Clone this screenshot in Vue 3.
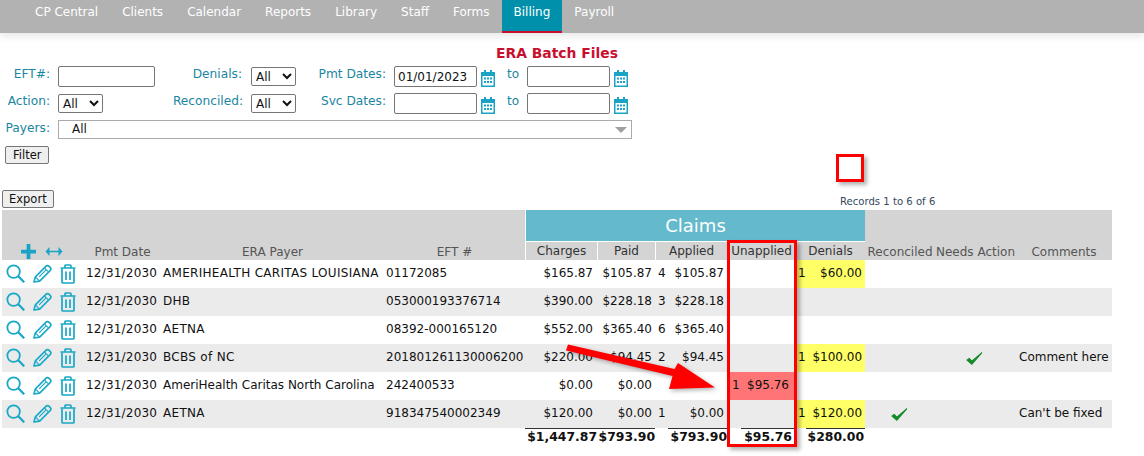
<script setup>
const nav = ['CP Central', 'Clients', 'Calendar', 'Reports', 'Library', 'Staff', 'Forms', 'Billing', 'Payroll']
const rows = [
  { date: '12/31/2030', payer: 'AMERIHEALTH CARITAS LOUISIANA', caps: true, eft: '01172085', charges: '$165.87', paid: '$105.87', ac: '4', applied: '$105.87', dc: '1', denials: '$60.00' },
  { date: '12/31/2030', payer: 'DHB', caps: true, eft: '053000193376714', charges: '$390.00', paid: '$228.18', ac: '3', applied: '$228.18' },
  { date: '12/31/2030', payer: 'AETNA', caps: true, eft: '08392-000165120', charges: '$552.00', paid: '$365.40', ac: '6', applied: '$365.40' },
  { date: '12/31/2030', payer: 'BCBS of NC', caps: true, eft: '201801261130006200', charges: '$220.00', paid: '$94.45', ac: '2', applied: '$94.45', dc: '1', denials: '$100.00', action: true, comment: 'Comment here' },
  { date: '12/31/2030', payer: 'AmeriHealth Caritas North Carolina', eft: '242400533', charges: '$0.00', paid: '$0.00', uc: '1', unapplied: '$95.76' },
  { date: '12/31/2030', payer: 'AETNA', caps: true, eft: '918347540002349', charges: '$120.00', paid: '$0.00', ac: '1', applied: '$0.00', dc: '1', denials: '$120.00', reconciled: true, comment: "Can't be fixed" }
]
const cols = [82, 77, 223, 141, 72, 58, 13, 59, 14, 54, 11, 59, 70, 81, 96]
</script>

<template>
  <div class="page">
    <nav class="nav">
      <a v-for="n in nav" :key="n" class="tab" :class="{ active: n === 'Billing' }">{{ n }}</a>
    </nav>
    <h1 class="title">ERA Batch Files</h1>

    <form class="filters" @submit.prevent>
      <label>EFT#:</label>
      <input class="in" type="text" />
      <label class="m9">Denials:</label>
      <select class="sel"><option>All</option></select>
      <label>Pmt Dates:</label>
      <input class="in" type="text" value="01/01/2023" />
      <div class="datecell">
        <svg class="cal" viewBox="0 0 16 18"><path d="M1 3h3V1h2v2h4V1h2v2h3v15H1z" fill="#1ba3c6"/><path d="M2.500 7h11v9.500h-11z" fill="#fff"/><path d="M4 8.500h2v2H4zm3 0h2v2H7zm3 0h2v2h-2zM4 12h2v2H4zm3 0h2v2H7zm3 0h2v2h-2z" fill="#1ba3c6"/></svg>
        <span class="to">to</span>
      </div>
      <input class="in" type="text" />
      <svg class="cal" viewBox="0 0 16 18"><path d="M1 3h3V1h2v2h4V1h2v2h3v15H1z" fill="#1ba3c6"/><path d="M2.500 7h11v9.500h-11z" fill="#fff"/><path d="M4 8.500h2v2H4zm3 0h2v2H7zm3 0h2v2h-2zM4 12h2v2H4zm3 0h2v2H7zm3 0h2v2h-2z" fill="#1ba3c6"/></svg>

      <label>Action:</label>
      <select class="sel"><option>All</option></select>
      <label>Reconciled:</label>
      <select class="sel"><option>All</option></select>
      <label>Svc Dates:</label>
      <input class="in" type="text" />
      <div class="datecell">
        <svg class="cal" viewBox="0 0 16 18"><path d="M1 3h3V1h2v2h4V1h2v2h3v15H1z" fill="#1ba3c6"/><path d="M2.500 7h11v9.500h-11z" fill="#fff"/><path d="M4 8.500h2v2H4zm3 0h2v2H7zm3 0h2v2h-2zM4 12h2v2H4zm3 0h2v2H7zm3 0h2v2h-2z" fill="#1ba3c6"/></svg>
        <span class="to">to</span>
      </div>
      <input class="in" type="text" />
      <svg class="cal" viewBox="0 0 16 18"><path d="M1 3h3V1h2v2h4V1h2v2h3v15H1z" fill="#1ba3c6"/><path d="M2.500 7h11v9.500h-11z" fill="#fff"/><path d="M4 8.500h2v2H4zm3 0h2v2H7zm3 0h2v2h-2zM4 12h2v2H4zm3 0h2v2H7zm3 0h2v2h-2z" fill="#1ba3c6"/></svg>

      <label>Payers:</label>
      <div class="payers"><span>All</span><i class="caret"></i></div>
    </form>

    <button class="btn filter" type="button">Filter</button>

    <div class="exportrow">
      <button class="btn export" type="button">Export</button>
      <span class="records">Records 1 to 6 of 6</span>
    </div>

    <table class="grid">
      <colgroup><col v-for="(c, i) in cols" :key="i" :style="{ width: c + 'px' }" /></colgroup>
      <thead>
        <tr class="r1">
          <th rowspan="2" class="tools">
            <svg class="plus" viewBox="0 0 16 16"><path d="M6 0h4v6h6v4h-6v6H6v-6H0V6h6z" fill="#1ba3c6"/></svg>
            <svg class="arrows" viewBox="0 0 18 9"><path d="M4.500 0 .5 4.500 4.500 9V5.300h9V9l4-4.500-4-4.500v3.700h-9z" fill="#1ba3c6"/></svg>
          </th>
          <th rowspan="2">Pmt Date</th>
          <th rowspan="2">ERA Payer</th>
          <th rowspan="2">EFT #</th>
          <th colspan="8" class="claims">Claims</th>
          <th rowspan="2" class="nw">Reconciled</th>
          <th rowspan="2" class="nw">Needs Action</th>
          <th rowspan="2">Comments</th>
        </tr>
        <tr class="r2">
          <th class="sub">Charges</th>
          <th class="sub">Paid</th>
          <th class="sub" colspan="2">Applied</th>
          <th class="sub" colspan="2">Unapplied</th>
          <th class="sub" colspan="2">Denials</th>
        </tr>
      </thead>
      <tbody>
        <tr v-for="(r, i) in rows" :key="i" class="row">
          <td class="ic">
            <svg class="i" viewBox="0 0 20 20"><circle cx="8" cy="8" r="6.600" fill="none" stroke="#18a8c8" stroke-width="1.900"/><path d="M12.900 12.900 19.200 19.200" stroke="#18a8c8" stroke-width="2.400" fill="none"/></svg>
            <svg class="i" viewBox="0 0 20 20"><path d="M1 19l1.500-5.500L13.500 2.500c1-1 2.500-1 3.500 0l1 1c1 1 1 2.500 0 3.500L7 18z" fill="none" stroke="#18a8c8" stroke-width="1.700" stroke-linejoin="round"/><path d="M3 14l4 4M12 4l4 4M6.500 13.500l7.500-7.500" stroke="#18a8c8" stroke-width="1.200" fill="none"/></svg>
            <svg class="i trash" viewBox="0 0 16 20"><path d="M.5 4h15M5 4V2c0-.7.500-1 1-1h4c.500 0 1 .3 1 1v2" fill="none" stroke="#18a8c8" stroke-width="1.700"/><path d="M2 4.500V18c0 .6.500 1 1 1h10c.500 0 1-.4 1-1V4.500" fill="none" stroke="#18a8c8" stroke-width="1.700"/><path d="M6 7.500v8.500M10 7.500v8.500" stroke="#18a8c8" stroke-width="1.700"/></svg>
          </td>
          <td class="date">{{ r.date }}</td>
          <td class="payer" :class="{ caps: r.caps }">{{ r.payer }}</td>
          <td class="eft">{{ r.eft }}</td>
          <td class="num charges">{{ r.charges }}</td>
          <td class="num">{{ r.paid }}</td>
          <td class="cnt">{{ r.ac }}</td>
          <td class="num">{{ r.applied }}</td>
          <td class="cnt ucnt" :class="{ pink: r.unapplied }">{{ r.uc }}</td>
          <td class="num unapp" :class="{ pink: r.unapplied }">{{ r.unapplied }}</td>
          <td class="cnt" :class="{ yellow: r.denials }">{{ r.dc }}</td>
          <td class="num" :class="{ yellow: r.denials }">{{ r.denials }}</td>
          <td class="ck"><svg v-if="r.reconciled" class="check" viewBox="0 0 16 14"><path d="M1 8.500 5.500 12.500 15 1.500 5.500 9.500 3 7z" fill="#168a2b" stroke="#168a2b" stroke-width="1"/></svg></td>
          <td class="ck"><svg v-if="r.action" class="check" viewBox="0 0 16 14"><path d="M1 8.500 5.500 12.500 15 1.500 5.500 9.500 3 7z" fill="#168a2b" stroke="#168a2b" stroke-width="1"/></svg></td>
          <td class="cm">{{ r.comment }}</td>
        </tr>
      </tbody>
      <tfoot>
        <tr class="tot">
          <td colspan="4"></td>
          <td class="num line">$1,447.87</td>
          <td class="num line">$793.90</td>
          <td></td>
          <td class="num line">$793.90</td>
          <td></td>
          <td class="num line t3">$95.76</td>
          <td></td>
          <td class="num line t1">$280.00</td>
          <td colspan="3"></td>
        </tr>
      </tfoot>
    </table>

    <div class="mark square"></div>
    <div class="mark column"></div>
    <svg class="arrow" viewBox="0 0 1144 456"><polygon points="568,344.500 566,350.500 672.500,376 669,389 715,387.500 678,363 674.500,369" fill="#f00" /></svg>
  </div>
</template>

<style>
html, body { margin: 0; background: #fff; }
</style>

<style scoped>
.page { position: relative; width: 1144px; height: 456px; overflow: hidden; font-family: "DejaVu Sans", sans-serif; font-size: 12px; color: #111; }
.nav { display: flex; height: 33px; padding-left: 23px; background: #b2b2b2; box-shadow: 0 3px 8px rgba(0, 0, 0, .1); box-sizing: border-box; }
.tab { padding: 5px 12px 0; color: #fff; font-size: 12px; white-space: nowrap; box-sizing: border-box; }
.tab.active { background: #0090ab; border-bottom: 2px solid #c8102e; }
.title { margin: 12px 0 0 496px; font-size: 13.900px; line-height: 17px; font-weight: bold; color: #c8102e; white-space: nowrap; height: 17px; }
.filters { display: grid; grid-template-columns: 58px 97px 96px 45px 98px 83px 50px 83px 22px; grid-template-rows: 27px 27px 25px; margin-top: 4px; align-items: center; }
.filters label { justify-self: end; margin-right: 8px; color: #1a86a0; font-size: 12.200px; align-self: start; padding-top: 1px; }
.filters label.m9 { margin-right: 9px; }
.in { width: 100%; height: 21px; box-sizing: border-box; border: 1px solid #767676; border-radius: 2px; padding: 0 3px; font: 12px "DejaVu Sans", sans-serif; color: #111; align-self: start; margin: 0; }
.sel { height: 19px; box-sizing: border-box; width: 45px; border: 1px solid #767676; border-radius: 2px; font: 12px "DejaVu Sans", sans-serif; background: #fff; color: #111; align-self: start; margin: 1px 0 0; padding: 0; }
.datecell { display: flex; align-items: flex-start; align-self: start; }
.cal { width: 16px; height: 18px; margin: 3px 0 0 3px; align-self: start; flex: none; }
.to { margin-left: 11px; color: #1a86a0; font-size: 12px; padding-top: 1px; }
.payers { grid-column: 2 / -1; height: 19px; width: 574px; box-sizing: border-box; border: 1px solid #aaa; padding-left: 13px; line-height: 17px; font-size: 12px; position: relative; align-self: start; }
.caret { position: absolute; right: 4px; top: 6px; border: 6px solid transparent; border-top: 6px solid #a0a0a0; border-bottom: 0; }
.btn { display: block; height: 18px; padding: 0 7px; box-sizing: border-box; border: 1px solid #767676; border-radius: 2px; background: #efefef; font: 11.500px "DejaVu Sans", sans-serif; color: #111; }
.btn.export { padding: 0 6px; }
.filter { margin: 1px 0 0 5px; }
.exportrow { display: flex; margin: 26px 0 0 2px; height: 20px; position: relative; justify-content: space-between; }
.records { position: absolute; left: 838px; top: 6px; font-size: 10.100px; color: #34495e; white-space: nowrap; }
.grid { border-collapse: separate; border-spacing: 0; table-layout: fixed; width: 1110px; margin: 0 0 0 2px; }
.grid th { background: #d4d4d4; color: #555; font-weight: normal; vertical-align: bottom; padding: 0 0 1px; font-size: 12px; height: auto; white-space: nowrap; }
.r1 { height: 32px; }
.r2 { height: 18px; }
.grid th.claims { background: #64b9cc; color: #fff; font-size: 18px; vertical-align: middle; border-left: 1px solid #fff; border-bottom: 1px solid #fff; padding: 0; }
.grid th.sub { border-left: 1px solid #fff; padding: 0; color: #333; vertical-align: middle; line-height: 18px; }
.tools { text-align: left; }
.plus { width: 15px; height: 15px; margin-left: 19px; vertical-align: bottom; }
.arrows { width: 18px; height: 9px; margin: 0 0 3px 9px; vertical-align: bottom; }
.row { height: 28px; }
.row:nth-child(even) td { background: #ebebeb; }
.row td { padding: 0 0 3px; white-space: nowrap; overflow: hidden; vertical-align: middle; box-sizing: border-box; }
.row td.ic { padding: 0 0 1px 4px; }
.i { width: 19px; height: 19px; margin-right: 8px; vertical-align: middle; }
.i.trash { width: 16px; height: 20px; margin-right: 0; }
.row td.date { padding-left: 2px; letter-spacing: .2px; }
.row td.payer { padding-left: 2px; }
.row td.caps { letter-spacing: .3px; }
.row td.eft { padding-left: 2px; }
.num { text-align: right; padding-right: 3px !important; }
.row td.charges { padding-right: 4px !important; }
.row td.unapp { padding-right: 6px !important; }
.cnt { padding-left: 3px !important; }
.row td.ucnt { padding-left: 5px !important; }
.row td.pink { background: #ff7575; }
.row td.yellow { background: #ffff66; }
.ck { text-align: center; }
.row td.ck { padding: 1px 2px 0 0; }
.row td.cm { padding-left: 3px; }
.check { width: 17px; height: 15px; vertical-align: middle; }
.nw { white-space: nowrap; }
.tot td { font-weight: bold; padding: 1px 0 0; height: 15px; line-height: 14px; font-size: 12.400px; white-space: nowrap; box-sizing: border-box; }
.tot td.num { padding-right: 0 !important; }
.tot td.t3 { padding-right: 3px !important; }
.tot td.t1 { padding-right: 1px !important; }
.tot .line { border-top: 1px solid #333; }
.mark { position: absolute; box-sizing: border-box; border: 3px solid #f00; box-shadow: 3px 3px 4px rgba(0, 0, 0, .3); }
.square { left: 836px; top: 154px; width: 28px; height: 28px; }
.column { left: 727px; top: 240px; width: 70px; height: 207px; border-width: 3px; }
.arrow { position: absolute; left: 0; top: 0; width: 1144px; height: 456px; filter: drop-shadow(2px 2px 2px rgba(0, 0, 0, .3)); }
</style>
